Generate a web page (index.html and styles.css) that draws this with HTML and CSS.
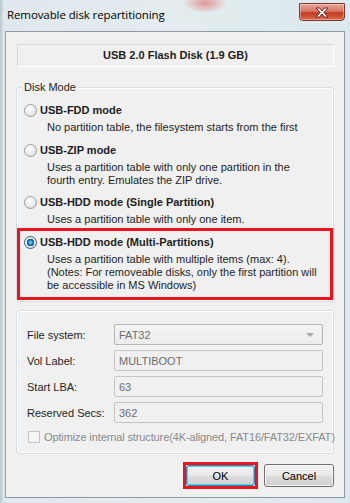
FILE: index.html
```html
<!DOCTYPE html>
<html lang="en">
<head>
<meta charset="UTF-8" />
<title>Removable disk repartitioning</title>
<link rel="stylesheet" href="styles.css">
</head>
<body>

<div class="window">
  <div class="titlebar">
    <span class="title">Removable disk repartitioning</span>
    <span class="close">
      <svg width="16" height="11" viewBox="0 0 16 11">
        <path d="M2 1h3.5L8 4l2.5-3H14L9.8 5.5 14 10h-3.5L8 7l-2.5 3H2l4.2-4.5z" fill="#fff" stroke="#6a2a22" stroke-width="1" stroke-linejoin="round"/>
      </svg>
    </span>
  </div>

  <div class="client">
    <div class="device">USB 2.0 Flash Disk (1.9 GB)</div>

    <div class="group mode">
      <span class="group-title">Disk Mode</span>

      <div class="option"><span class="radio"></span>USB-FDD mode</div>
      <p class="desc">No partition table, the filesystem starts from the first</p>

      <div class="option"><span class="radio"></span>USB-ZIP mode</div>
      <p class="desc">Uses a partition table with only one partition in the<br>fourth entry. Emulates the ZIP drive.</p>

      <div class="option"><span class="radio"></span>USB-HDD mode (Single Partition)</div>
      <p class="desc">Uses a partition table with only one item.</p>

      <div class="marked">
        <div class="option"><span class="radio checked"></span>USB-HDD mode (Multi-Partitions)</div>
        <p class="desc">Uses a partition table with multiple items (max: 4).<br>(Notes: For removeable disks, only the first partition will<br>be accessible in MS Windows)</p>
      </div>
    </div>

    <div class="group params">
      <div class="field">
        <span class="field-label">File system:</span>
        <div class="input select">FAT32<span class="caret"></span></div>
      </div>
      <div class="field">
        <span class="field-label">Vol Label:</span>
        <div class="input">MULTIBOOT</div>
      </div>
      <div class="field">
        <span class="field-label">Start LBA:</span>
        <div class="input">63</div>
      </div>
      <div class="field last">
        <span class="field-label">Reserved Secs:</span>
        <div class="input">362</div>
      </div>
      <div class="check"><span class="box"></span>Optimize internal structure(4K-aligned, FAT16/FAT32/EXFAT)</div>
    </div>

    <div class="actions">
      <div class="marked-btn"><span class="btn default">OK</span></div>
      <span class="btn cancel">Cancel</span>
    </div>
  </div>
</div>

</body>
</html>
```

FILE: styles.css
```css
* {
  box-sizing: border-box;
}
body {
  margin: 0;
  width: 350px;
  height: 503px;
  overflow: hidden;
  font-family: 'Liberation Sans', Arial, sans-serif;
  font-size: 11px;
  color: #1e1e1e;
  background:
    radial-gradient(ellipse 22px 10px at 205px 3px, rgba(226,90,90,0.6), transparent),
    linear-gradient(90deg, #b9c6cb 0, #dfe9ed 4px, #e3edf0 50%, #dce8ec 100%);
}
.window {
  height: 100%;
  display: flex;
  flex-direction: column;
}
.titlebar {
  height: 31px;
  display: flex;
  align-items: flex-start;
  justify-content: space-between;
  padding: 0 5px 0 7px;
}
.title {
  font-family: 'Open Sans', 'Noto Sans', sans-serif;
  font-size: 11.5px;
  margin-top: 7px;
  color: #000;
  letter-spacing: -0.1px;
}
.close {
  margin-top: 3px;
  width: 46px;
  height: 18px;
  border: 1px solid #7a3a32;
  border-radius: 0 0 4px 4px;
  background: linear-gradient(#e8a493 0, #d47865 45%, #c4391f 55%, #d86a4f 100%);
  display: flex;
  align-items: center;
  justify-content: center;
  box-shadow: inset 0 0 0 1px rgba(255,255,255,0.35);
}
.client {
  margin: 0 5px;
  height: 467px;
  border: 1px solid #8d9aa2;
  background: #f0f0f0;
  padding: 12px 10px 0;
  display: flex;
  flex-direction: column;
}
.device {
  height: 23px;
  border: 1px solid #d7d7d7;
  border-right-color: #fff;
  border-bottom-color: #fff;
  background: #f0f0f0;
  font-weight: 700;
  text-align: center;
  line-height: 21px;
  margin: 0 0 0 1px;
  width: 317px;
}
.group {
  position: relative;
  border: 1px solid #d5dfe5;
  border-radius: 3px;
  box-shadow: inset 0 0 0 1px #fff;
}
.group-title {
  position: absolute;
  top: -7px;
  left: 5px;
  padding: 0 2px;
  background: #f0f0f0;
  line-height: 13px;
}
.mode {
  margin-top: 20px;
  padding: 14px 7px 1px 7px;
}
.option {
  display: flex;
  align-items: center;
  height: 16px;
  font-weight: 700;
  margin-top: 7px;
}
.mode > .option:first-of-type {
  margin-top: 0;
}
.mode > .option:nth-of-type(2) {
  margin-top: 8px;
}
.radio {
  width: 13px;
  height: 13px;
  border: 1px solid #9a9a9a;
  border-radius: 50%;
  background: radial-gradient(circle at 40% 35%, #fff 0, #f0f0f0 40%, #d4d4d4 100%);
  margin-right: 3px;
  flex: none;
}
.radio.checked {
  border-color: #2c628b;
  background:
    radial-gradient(circle, #7fd0f5 0, #1a7cc1 2.5px, #0d4f86 3.5px, transparent 4px),
    radial-gradient(circle at 40% 35%, #fff 0, #e8e8e8 60%, #c8c8c8 100%);
}
.desc {
  margin: 3px 0 0 23px;
  line-height: 13px;
  white-space: nowrap;
}
.marked {
  margin: 2px -7px 0 -7px;
  border: 3px solid #e8151f;
  padding: 3px 7px 5px 4px;
}
.marked .option {
  margin-top: 0;
}
.params {
  margin-top: 8px;
  padding: 13px 10px 10px 10px;
}
.field {
  display: flex;
  align-items: center;
  margin-bottom: 5px;
}
.field.last {
  margin-top: 1px;
  margin-bottom: 0;
}
.field-label {
  width: 87px;
  flex: none;
}
.input {
  width: 209px;
  height: 21px;
  border: 1px solid #c5c5c5;
  border-radius: 2px;
  background: #f0f0f0;
  color: #6d6d6d;
  padding: 0 0 0 4px;
  display: flex;
  align-items: center;
  justify-content: space-between;
}
.select {
  border-color: #b5b5b5;
  background: linear-gradient(#f4f4f4, #ececec);
  padding-right: 8px;
}
.caret {
  width: 0;
  height: 0;
  border-left: 4px solid transparent;
  border-right: 4px solid transparent;
  border-top: 4px solid #a9a9a9;
}
.check {
  display: flex;
  align-items: center;
  color: #8a8a8a;
  margin-top: 8px;
  margin-left: 1px;
  height: 12px;
  white-space: nowrap;
  letter-spacing: -0.12px;
}
.box {
  width: 12px;
  height: 12px;
  border: 1px solid #c4c4c4;
  background: #f4f4f4;
  margin-right: 4px;
  flex: none;
}
.actions {
  display: flex;
  justify-content: flex-end;
  align-items: center;
  gap: 6px;
  margin-top: 8px;
}
.marked-btn {
  border: 3px solid #e8151f;
}
.btn {
  display: flex;
  align-items: center;
  justify-content: center;
  width: 69px;
  height: 21px;
  border: 1px solid #707070;
  border-radius: 3px;
  background: linear-gradient(#f2f2f2 0, #ebebeb 48%, #dddddd 52%, #cfcfcf 100%);
  box-shadow: inset 0 0 0 1px rgba(255,255,255,0.7);
  color: #000;
}
.btn.cancel {
  width: 70px;
  height: 23px;
}
.btn.default {
  border-color: #3c7fb1;
  box-shadow: inset 0 0 0 1px #48d6f5;
}
```
